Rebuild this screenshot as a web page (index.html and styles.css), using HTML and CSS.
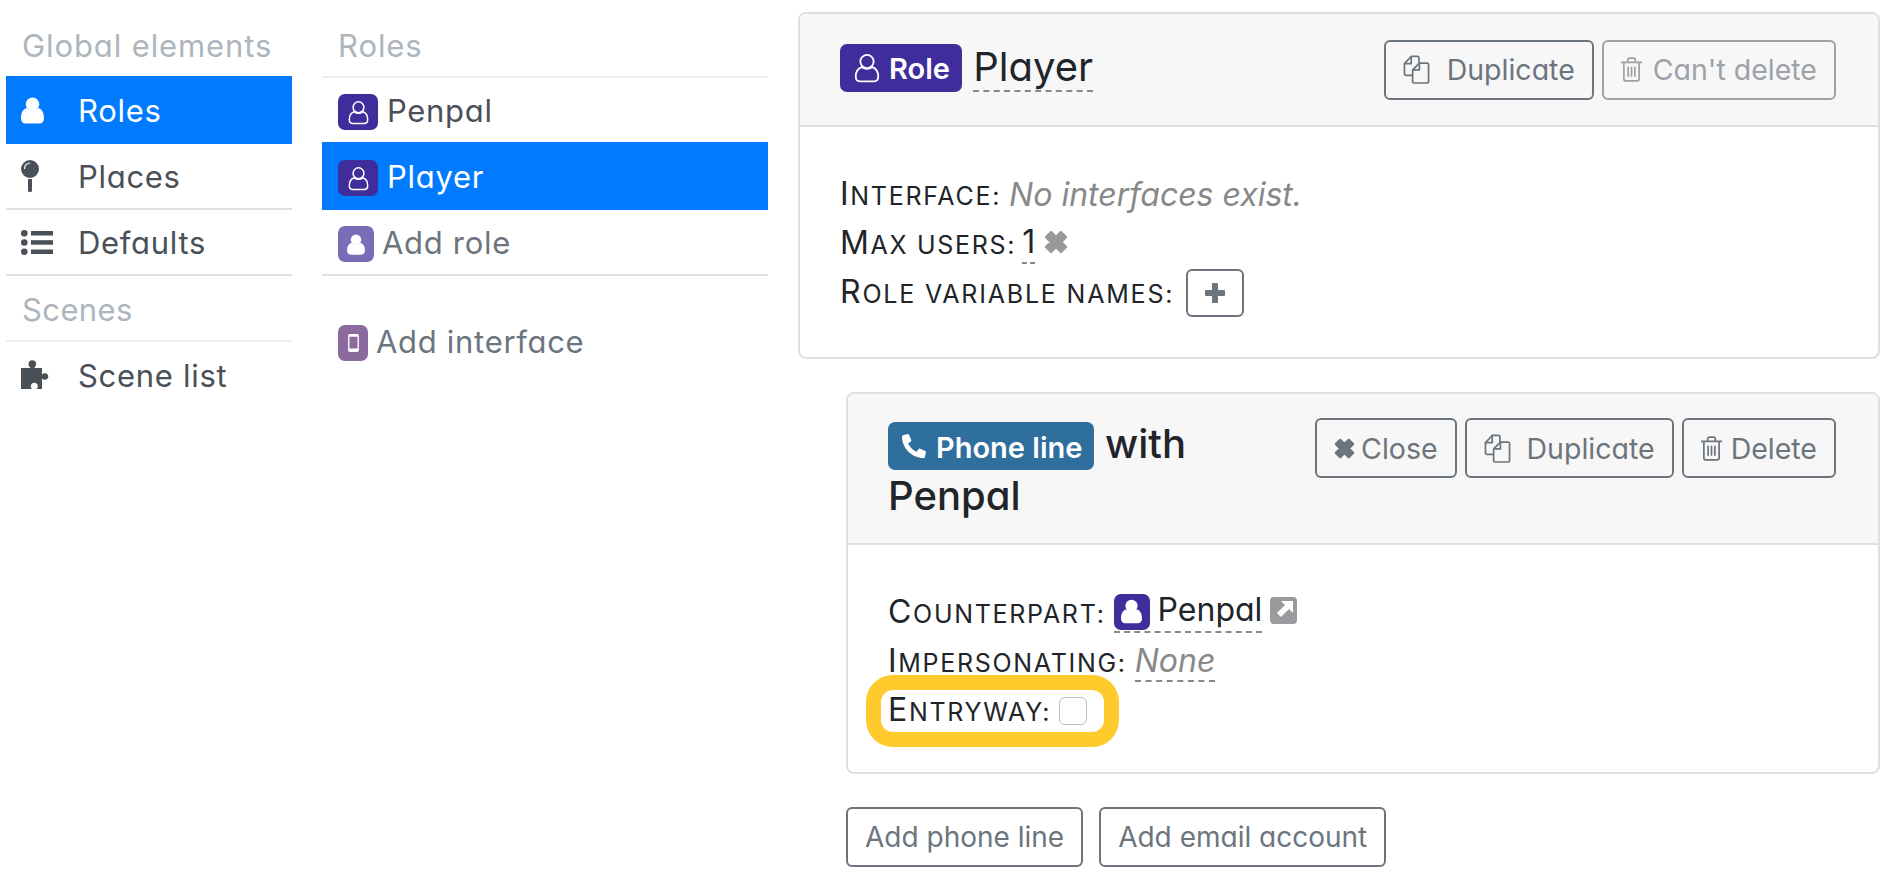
FILE: index.html
```html
<!DOCTYPE html>
<html lang="en">
    <head>
        <meta charset="utf-8">
        <meta name="viewport" content="width=device-width, initial-scale=1.0">
        <title>Roles</title>
        <link rel="stylesheet" href="styles.css">
    </head>
    <body>
        <svg class="defs" width="0" height="0">
            <symbol id="i-user" viewBox="0 0 24 28">
                <circle cx="12" cy="7.5" r="7"/>
                <path d="M0 22c0-6 2.500-9.500 6-10.500 1.500 1.500 3.800 2.500 6 2.500s4.500-1 6-2.500c3.500 1 6 4.500 6 10.500 0 3.500-2 5.500-5 5.500H5c-3 0-5-2-5-5.500z"/>
            </symbol>
            <symbol id="i-user-o" viewBox="0 0 24 28">
                <g fill="none" stroke="currentColor" stroke-width="1.700">
                    <circle cx="12" cy="8" r="6.200"/>
                    <path d="M7 13.200C3.500 14.500 1.500 17.500 1.500 22c0 2.800 1.500 4.500 4 4.500h13c2.500 0 4-1.700 4-4.500 0-4.500-2-7.500-5.500-8.800-1.300 1-3.100 1.600-5 1.600s-3.700-.6-5-1.600z"/>
                </g>
            </symbol>
            <symbol id="i-pin" viewBox="0 0 18 32">
                <path d="M9 0a9 9 0 1 1 0 18A9 9 0 0 1 9 0zM7 19h4v11.500a1.500 1.500 0 0 1-1.500 1.500h-1A1.500 1.500 0 0 1 7 30.500z"/>
                <path d="M3.500 9C3.500 5.500 5.500 3.500 9 3" fill="none" stroke="#fff" stroke-width="1.200"/>
            </symbol>
            <symbol id="i-list" viewBox="0 0 32 25">
                <circle cx="3.300" cy="3.300" r="3.300"/>
                <circle cx="3.300" cy="12.500" r="3.300"/>
                <circle cx="3.300" cy="21.700" r="3.300"/>
                <rect x="10" y="1" width="22" height="4.500"/>
                <rect x="10" y="10.200" width="22" height="4.500"/>
                <rect x="10" y="19.500" width="22" height="4.500"/>
            </symbol>
            <symbol id="i-puzzle" viewBox="0 0 30 30">
                <path d="M0 8h9.500C8.500 7 7.500 5.800 7.500 4a3.800 3.800 0 0 1 7.600 0c0 1.800-1 3-2 4H21v6.500c.8-.8 1.800-1.300 3-1.300 1.900 0 3.300 1.500 3.300 3.300s-1.400 3.300-3.300 3.300c-1.200 0-2.200-.5-3-1.300V29h-5.500c.8-.8 1.300-1.800 1.300-2.800 0-1.900-1.600-3.400-3.500-3.400s-3.500 1.500-3.500 3.400c0 1 .5 2 1.300 2.800H0z"/>
            </symbol>
            <symbol id="i-phone" viewBox="0 0 512 512">
                <path transform="translate(512 0) scale(-1 1)" d="M493.400 24.600l-104-24c-11.300-2.600-22.900 3.300-27.500 13.900l-48 112c-4.200 9.800-1.400 21.300 6.900 28l60.600 49.600c-36 76.700-98.900 140.500-177.200 177.200l-49.600-60.600c-6.800-8.300-18.200-11.100-28-6.900l-112 48C3.900 366.500-2 378.100.6 389.400l24 104C27.100 504.200 36.700 512 48 512c256.100 0 464-207.500 464-464 0-11.200-7.700-20.900-18.600-23.400z"/>
            </symbol>
            <symbol id="i-mobile" viewBox="0 0 12 20">
                <path fill-rule="evenodd" d="M2 0h8a2 2 0 0 1 2 2v16a2 2 0 0 1-2 2H2a2 2 0 0 1-2-2V2a2 2 0 0 1 2-2zM1.500 3v13h9V3z"/>
            </symbol>
            <symbol id="i-copy" viewBox="0 0 28 30">
                <g fill="none" stroke="currentColor" stroke-width="1.800" stroke-linejoin="round">
                    <path d="M10 21H3a1.500 1.500 0 0 1-1.500-1.500V9L8.500 1.500H15a1.500 1.500 0 0 1 1.500 1.500v5"/>
                    <path d="M8.500 1.500V9h-7"/>
                    <path d="M10 15.500 17 8.500h8a1.500 1.500 0 0 1 1.500 1.500v17.500A1.500 1.500 0 0 1 25 29H11.500a1.500 1.500 0 0 1-1.500-1.500z"/>
                    <path d="M17 8.500v7h-7"/>
                </g>
            </symbol>
            <symbol id="i-trash" viewBox="0 0 22 26">
                <g fill="none" stroke="currentColor" stroke-width="1.800">
                    <path d="M0 5.500h22M7 5.500V3a2 2 0 0 1 2-2h4a2 2 0 0 1 2 2v2.500"/>
                    <path d="M3 5.500v17.500A2 2 0 0 0 5 25h12a2 2 0 0 0 2-2V5.500"/>
                    <path d="M7.500 10v10.500M11 10v10.500M14.500 10v10.500"/>
                </g>
            </symbol>
            <symbol id="i-times" viewBox="0 0 22 22">
                <path d="M2 6.500 6.500 2 11 6.500 15.500 2 20 6.500 15.500 11 20 15.500 15.500 20 11 15.500 6.500 20 2 15.500 6.500 11z" stroke="currentColor" stroke-width="2.500" stroke-linejoin="round"/>
            </symbol>
            <symbol id="i-plus" viewBox="0 0 22 22">
                <path d="M8.500 1.500h5v7h7v5h-7v7h-5v-7h-7v-5h7z" stroke="currentColor" stroke-width="1" stroke-linejoin="round"/>
            </symbol>
            <symbol id="i-ext" viewBox="0 0 27 27">
                <rect width="27" height="27" rx="4" fill="#999b9e"/>
                <path d="M11 4h12v12l-4-4-8 8-4-4 8-8z" fill="#fff"/>
            </symbol>
        </svg>

        <div class="page">
            <nav class="col-global">
                <div class="col-head">Global elements</div>
                <a class="row active"><svg class="nav-ico ico-user"><use href="#i-user"/></svg>Roles</a>
                <a class="row"><svg class="nav-ico ico-pin"><use href="#i-pin"/></svg>Places</a>
                <a class="row"><svg class="nav-ico ico-list"><use href="#i-list"/></svg>Defaults</a>
                <div class="col-head head-scenes">Scenes</div>
                <a class="row plain"><svg class="nav-ico ico-puzzle"><use href="#i-puzzle"/></svg>Scene list</a>
            </nav>

            <nav class="col-roles">
                <div class="col-head">Roles</div>
                <a class="row sub-row plain first-role"><span class="chip chip-role"><svg><use href="#i-user-o"/></svg></span>Penpal</a>
                <a class="row sub-row active"><span class="chip chip-role"><svg><use href="#i-user-o"/></svg></span>Player</a>
                <a class="row sub-row muted"><span class="chip chip-add"><svg><use href="#i-user"/></svg></span>Add role</a>
                <a class="row sub-row muted plain add-interface"><span class="chip chip-iface"><svg><use href="#i-mobile"/></svg></span>Add interface</a>
            </nav>

            <main class="col-main">
                <section class="card">
                    <header class="card-head head-role">
                        <h1 class="card-title"><span class="badge badge-role"><svg><use href="#i-user-o"/></svg><span>Role</span></span> <span class="editable">Player</span></h1>
                        <div class="actions">
                            <button class="btn"><svg class="btn-ico"><use href="#i-copy"/></svg><span class="gap-text wide">Duplicate</span></button>
                            <button class="btn disabled"><svg class="btn-trash"><use href="#i-trash"/></svg>Can't delete</button>
                        </div>
                    </header>
                    <div class="card-body">
                        <div class="field"><label>Interface:</label><em class="none">No interfaces exist.</em></div>
                        <div class="field"><label>Max users:</label><span class="editable one">1</span><svg class="clear"><use href="#i-times"/></svg></div>
                        <div class="field"><label class="before-plus">Role variable names:</label><button class="btn btn-plus"><svg><use href="#i-plus"/></svg></button></div>
                    </div>
                </section>

                <section class="card card-line">
                    <header class="card-head head-line">
                        <h1 class="card-title title-line"><span class="badge badge-line"><svg class="phone"><use href="#i-phone"/></svg><span>Phone line</span></span> <span>with</span> <span>Penpal</span></h1>
                        <div class="actions">
                            <button class="btn"><svg class="btn-times"><use href="#i-times"/></svg>Close</button>
                            <button class="btn"><svg class="btn-ico"><use href="#i-copy"/></svg><span class="gap-text">Duplicate</span></button>
                            <button class="btn"><svg class="btn-trash"><use href="#i-trash"/></svg>Delete</button>
                        </div>
                    </header>
                    <div class="card-body">
                        <div class="field"><label>Counterpart:</label><span class="editable link"><span class="chip chip-role chip-sq"><svg><use href="#i-user"/></svg></span>Penpal</span><svg class="ext"><use href="#i-ext"/></svg></div>
                        <div class="field"><label>Impersonating:</label><em class="none editable">None</em></div>
                        <div class="field"><div class="callout"><label>Entryway:</label><span class="checkbox"></span></div></div>
                    </div>
                </section>

                <div class="add-buttons">
                    <button class="btn">Add phone line</button>
                    <button class="btn">Add email account</button>
                </div>
            </main>
        </div>
    </body>
</html>
```

FILE: styles.css
```css
:root {
    --blue: #007bff;
    --slate: #495057;
    --gray: #6c757d;
    --line: #dee2e6;
    --role: #3f2d9c;
}

* {
    box-sizing: border-box;
}

body {
    margin: 0;
    background: #fff;
    color: #212529;
    font-family: Inter, "Noto Sans", sans-serif;
    font-feature-settings: "cv11" 1;
    font-size: 28.5px;
    font-weight: 400;
}

.defs {
    position: absolute;
}

svg {
    fill: currentColor;
    flex: none;
}

.page {
    display: flex;
    align-items: flex-start;
    height: 888px;
    overflow: hidden;
    padding-left: 6px;
}

/* left columns */
.col-global,
.col-roles {
    font-size: 31px;
    letter-spacing: .7px;
}

.col-global {
    width: 286px;
    margin-right: 30px;
}

.col-roles {
    width: 446px;
    margin-right: 30px;
}

.col-head {
    height: 76px;
    padding: 26px 0 0 16px;
    color: #adb5bd;
    line-height: 40px;
    letter-spacing: .9px;
}

.col-roles .col-head {
    border-bottom: 2px solid #eee;
    height: 78px;
}

.head-scenes {
    height: 66px;
    padding-top: 14px;
    border-bottom: 2px solid #eee;
    letter-spacing: .4px;
}

.row {
    display: flex;
    align-items: center;
    height: 66px;
    padding-left: 15px;
    color: var(--slate);
    border-bottom: 2px solid var(--line);
}

.row.active {
    height: 68px;
    background: var(--blue);
    border-bottom: 0;
    color: #fff;
}

.row.plain {
    border-bottom: 0;
}

.first-role {
    height: 64px;
}

.nav-ico {
    margin-right: 25px;
}

.ico-user {
    width: 23px;
    height: 27px;
    margin-right: 34px;
}

.ico-pin {
    width: 18px;
    height: 32px;
    margin-right: 39px;
}

.ico-list {
    width: 32px;
    height: 25px;
}

.ico-puzzle {
    width: 30px;
    height: 30px;
    margin-right: 27px;
}

.sub-row {
    padding-left: 16px;
}

.muted {
    color: var(--gray);
}

.chip {
    display: flex;
    align-items: center;
    justify-content: center;
    height: 36px;
    margin: 4px 9px 0 0;
    border-radius: 7px;
    color: #fff;
}

.chip-role {
    width: 40px;
    background: var(--role);
}

.chip-role svg {
    width: 21px;
    height: 25px;
}

.chip-add {
    width: 36px;
    margin-right: 8px;
    background: #7a6db8;
}

.chip-add svg {
    width: 18px;
    height: 21px;
}

.chip-iface {
    width: 30px;
    margin-right: 8px;
    background: #8b6a9e;
}

.chip-iface svg {
    width: 11px;
    height: 18px;
}

.add-interface {
    margin-top: 32px;
}

/* cards */
.col-main {
    width: 1082px;
    padding-top: 12px;
}

.card {
    border: 2px solid #dfdfdf;
    border-radius: 8px;
    overflow: hidden;
}

.card-line {
    margin: 33px 0 0 48px;
}

.card-head {
    display: flex;
    align-items: center;
    justify-content: space-between;
    padding: 0 42px 0 40px;
    background: #f7f7f7;
    border-bottom: 2px solid #dfdfdf;
}

.head-role {
    height: 113px;
    padding-bottom: 6px;
}

.head-line {
    height: 151px;
    align-items: flex-start;
    padding-top: 24px;
}

.card-title {
    margin: 0;
    font-size: 40px;
    font-weight: 400;
    line-height: 52px;
}

.title-line {
    width: 320px;
    font-weight: 550;
}

.badge {
    display: inline-flex;
    align-items: center;
    height: 48px;
    padding: 3px 12px 0 14px;
    border-radius: 7px;
    color: #fff;
    font-size: 29px;
    font-weight: 600;
}

.badge svg {
    margin-top: -3px;
}

.badge-role {
    background: var(--role);
    vertical-align: -2px;
}

.badge-role svg {
    width: 26px;
    height: 30px;
    margin-right: 9px;
}

.badge-line {
    background: #2f6f9e;
}

.phone {
    width: 24px;
    height: 24px;
    margin-right: 10px;
}

.editable {
    display: inline-block;
    border-bottom: 2px dashed #888;
}

.card-title .editable {
    line-height: 46px;
}

.actions {
    display: flex;
    gap: 8px;
}

.head-role .actions {
    margin-top: 6px;
}

.btn {
    display: inline-flex;
    align-items: center;
    height: 60px;
    padding: 0 17px;
    background: transparent;
    border: 2px solid var(--gray);
    border-radius: 6px;
    color: var(--gray);
    font: inherit;
    font-feature-settings: inherit;
}

.btn.disabled {
    opacity: .65;
}

.btn.disabled .btn-trash {
    margin-right: 11px;
}

.gap-text {
    margin-left: 16px;
}

.gap-text.wide {
    margin-left: 17px;
}

.btn-ico {
    width: 27px;
    height: 29px;
}

.btn-trash {
    width: 21px;
    height: 25px;
    margin-right: 9px;
}

.btn-times {
    width: 21px;
    height: 21px;
    margin-right: 6px;
}

.card-body {
    padding: 43px 40px 40px;
}

.card-line .card-body {
    padding: 43px 40px 37px;
}

.field {
    display: flex;
    align-items: center;
    height: 49px;
    font-size: 32px;
}

.field label {
    display: block;
    margin-right: 8px;
    padding-bottom: 3px;
    font-size: 25px;
    letter-spacing: 1.7px;
    text-transform: uppercase;
}

.field label::first-letter {
    font-size: 32px;
}

.field label.before-plus {
    margin-right: 12px;
    letter-spacing: 1.8px;
}

.none {
    color: #888;
}

.one {
    height: 41px;
    line-height: 38px;
    margin-left: -2px;
}

.clear {
    width: 24px;
    height: 24px;
    margin: -4px 0 0 9px;
    color: #999;
}

.btn-plus {
    width: 58px;
    height: 48px;
    justify-content: center;
    padding: 0;
}

.btn-plus svg {
    width: 22px;
    height: 22px;
}

.link {
    display: inline-flex;
    align-items: center;
    height: 41px;
    padding-bottom: 5px;
}

.chip-sq {
    width: 36px;
    margin: 5px 8px 0 0;
}

.ext {
    width: 27px;
    height: 27px;
    margin: -5px 0 0 8px;
}

.callout {
    display: flex;
    align-items: center;
    height: 42px;
    margin-left: -7px;
    padding: 0 17px 0 7px;
    background: #fff;
    border-radius: 12px;
    box-shadow: 0 0 0 15px #ffca2c;
    position: relative;
}

.checkbox {
    width: 28px;
    height: 28px;
    border: 1px solid #bbb;
    border-radius: 6px;
}

.add-buttons {
    display: flex;
    gap: 16px;
    margin: 33px 0 0 48px;
    font-size: 28px;
}
```
